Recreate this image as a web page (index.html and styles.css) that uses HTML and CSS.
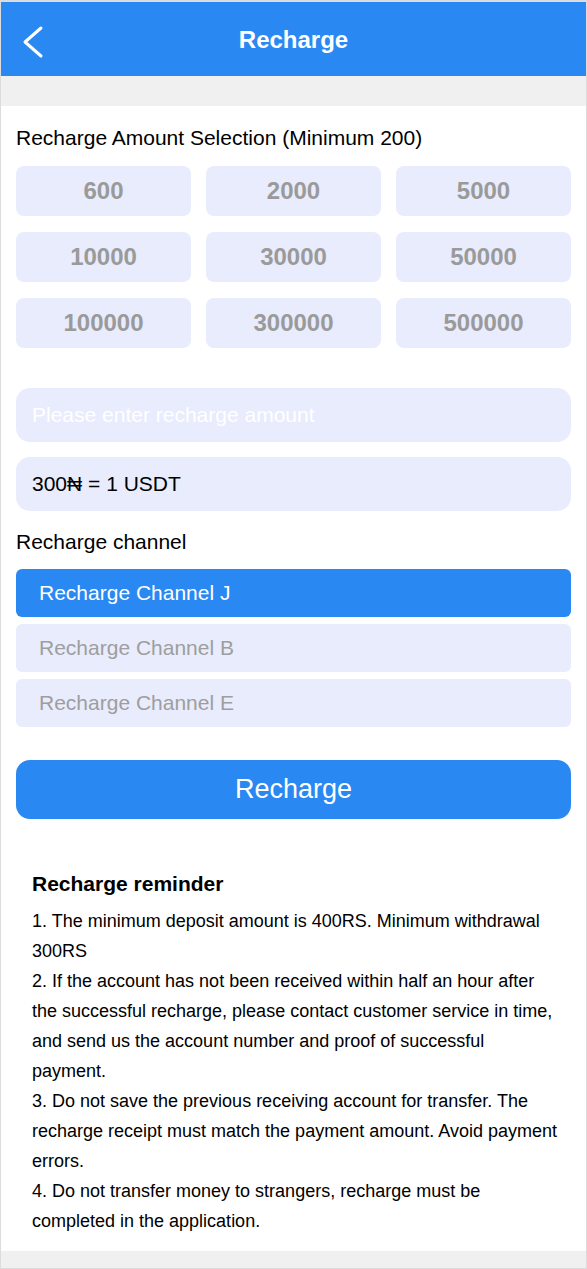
FILE: index.html
```html
<!DOCTYPE html>
<html lang="en">

<head>
    <meta charset="UTF-8" />
    <meta name="viewport" content="width=device-width, initial-scale=1.0" />
    <title>Recharge</title>
    <link rel="stylesheet" href="styles.css">
</head>

<body>
    <div class="page">
        <header class="topbar">
            <a class="back" href="#">
                <svg width="24" height="42" viewBox="0 0 24 42">
                    <polyline points="19,10 3,24 19,38" fill="none" stroke="#fff" stroke-width="3"
                        stroke-linecap="round" stroke-linejoin="round" />
                </svg>
            </a>
            <h1 class="topbar-title">Recharge</h1>
            <span></span>
        </header>

        <main class="content">
            <p class="label">Recharge Amount Selection (Minimum 200)</p>

            <div class="amounts">
                <div class="amount">600</div>
                <div class="amount">2000</div>
                <div class="amount">5000</div>
                <div class="amount">10000</div>
                <div class="amount">30000</div>
                <div class="amount">50000</div>
                <div class="amount">100000</div>
                <div class="amount">300000</div>
                <div class="amount">500000</div>
            </div>

            <input class="field amount-input" type="text" placeholder="Please enter recharge amount">
            <div class="field rate">300₦ = 1 USDT</div>

            <p class="label channel-label">Recharge channel</p>
            <div class="channels">
                <div class="channel active">Recharge Channel J</div>
                <div class="channel">Recharge Channel B</div>
                <div class="channel">Recharge Channel E</div>
            </div>

            <button class="submit">Recharge</button>

            <section class="reminder">
                <h2>Recharge reminder</h2>
                <p>1. The minimum deposit amount is 400RS. Minimum withdrawal 300RS</p>
                <p>2. If the account has not been received within half an hour after the successful recharge, please contact customer service in time, and send us the account number and proof of successful payment.</p>
                <p>3. Do not save the previous receiving account for transfer. The recharge receipt must match the payment amount. Avoid payment errors.</p>
                <p>4. Do not transfer money to strangers, recharge must be completed in the application.</p>
            </section>
        </main>
    </div>
</body>

</html>
```

FILE: styles.css
```css
* {
    box-sizing: border-box;
}

body {
    margin: 0;
    font-family: 'Liberation Sans', Arial, sans-serif;
    color: #000;
    background-color: #fff;
}

.page {
    min-height: 100vh;
    background-color: #f0f0f0;
    border: 1px solid #dcdcdc;
    border-top-width: 2px;
}

.topbar {
    height: 74px;
    background-color: #2a88f2;
    display: grid;
    grid-template-columns: 1fr auto 1fr;
    align-items: center;
    padding: 1px 21px 0;
}

.back {
    display: flex;
    width: 24px;
    margin-top: -1px;
}

.topbar-title {
    margin: 0;
    color: #fff;
    font-size: 24px;
    font-weight: bold;
}

.content {
    margin-top: 30px;
    background-color: #fff;
    padding: 20px 15px 15px;
}

.label {
    margin: 0;
    font-size: 21px;
    line-height: 24px;
}

.amounts {
    display: grid;
    grid-template-columns: repeat(3, 1fr);
    column-gap: 15px;
    row-gap: 16px;
    margin-top: 16px;
}

.amount {
    height: 50px;
    border-radius: 8px;
    background-color: #e8ecfd;
    color: #9a9a9a;
    font-size: 24px;
    font-weight: bold;
    display: flex;
    align-items: center;
    justify-content: center;
}

.field {
    display: flex;
    align-items: center;
    width: 100%;
    height: 54px;
    padding: 0 16px;
    border: none;
    border-radius: 14px;
    background-color: #e8ecfd;
    font-family: inherit;
    font-size: 21px;
    color: #000;
    outline: none;
}

.amount-input {
    margin-top: 40px;
}

.amount-input::placeholder {
    color: #fff;
    opacity: 1;
}

.rate {
    margin-top: 15px;
}

.channel-label {
    margin-top: 19px;
}

.channels {
    display: flex;
    flex-direction: column;
    gap: 7px;
    margin-top: 15px;
}

.channel {
    height: 48px;
    border-radius: 6px;
    background-color: #e8ecfd;
    color: #9e9e9e;
    font-size: 21px;
    padding-left: 23px;
    display: flex;
    align-items: center;
}

.channel.active {
    background-color: #2a88f2;
    color: #fff;
}

.submit {
    display: block;
    width: 100%;
    height: 59px;
    margin-top: 33px;
    border: none;
    border-radius: 14px;
    background-color: #2a88f2;
    color: #fff;
    font-family: inherit;
    font-size: 27px;
}

.reminder {
    padding: 50px 12px 0 16px;
}

.reminder h2 {
    margin: 0 0 7px;
    font-size: 21px;
    line-height: 30px;
}

.reminder p {
    margin: 0;
    font-size: 18px;
    line-height: 30px;
}
```
